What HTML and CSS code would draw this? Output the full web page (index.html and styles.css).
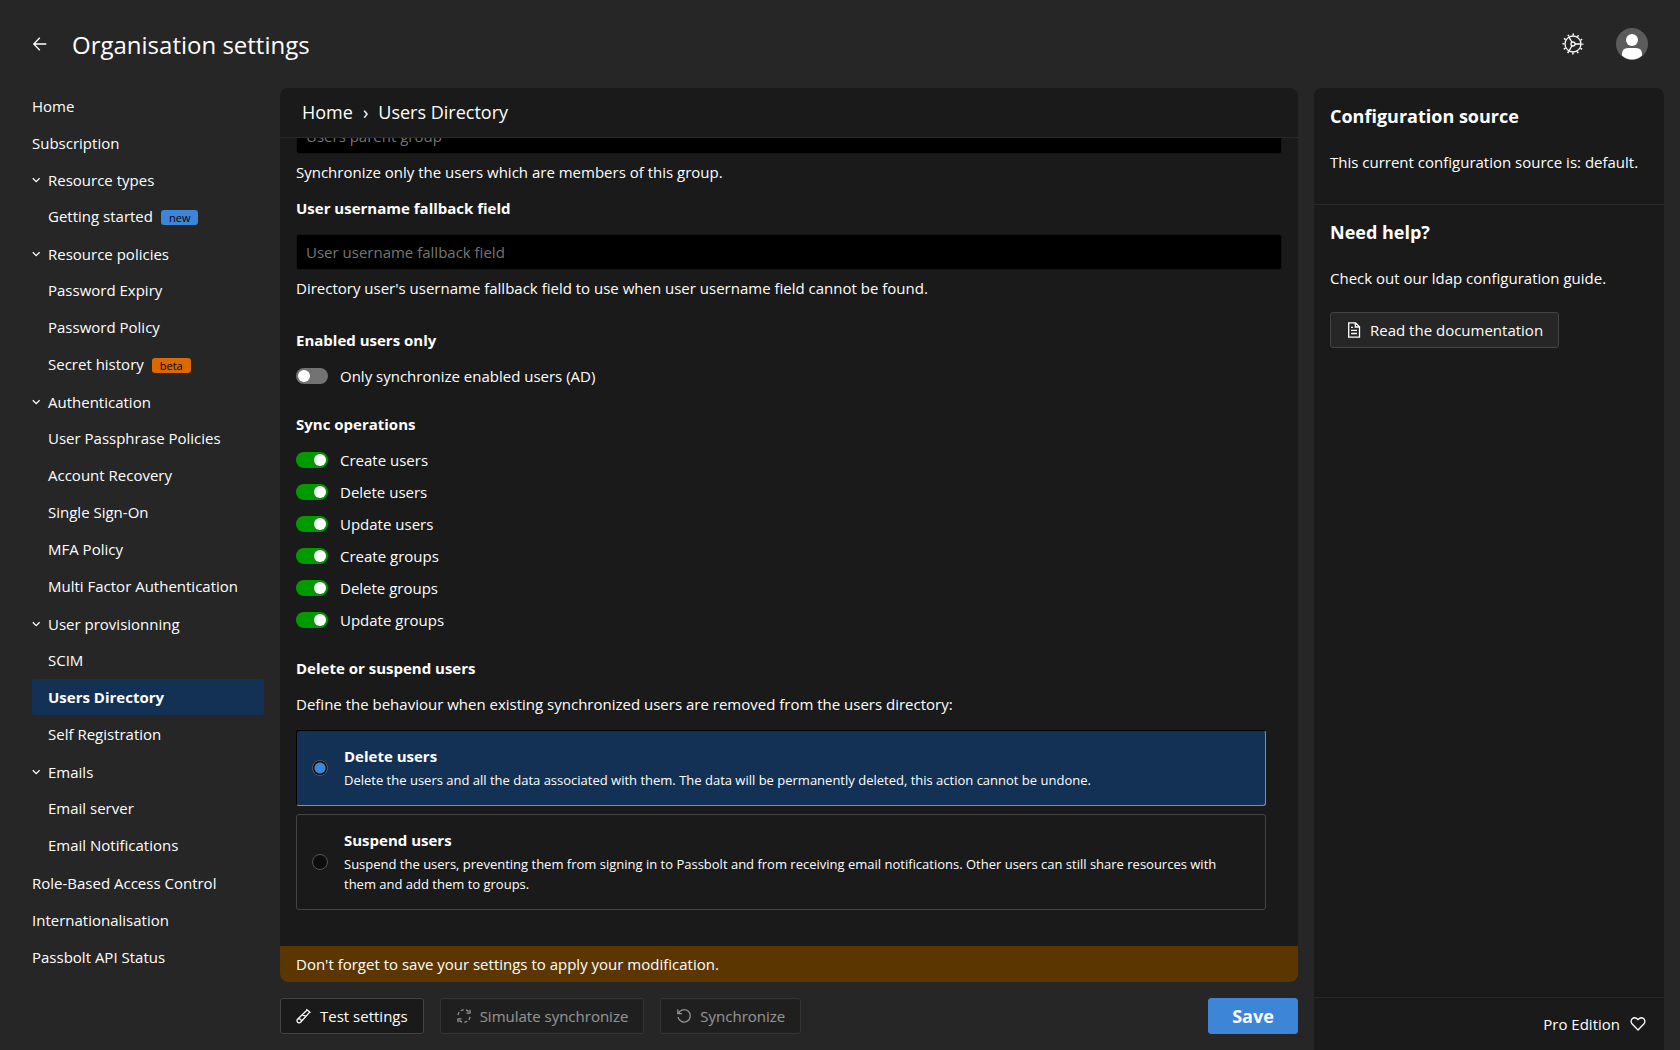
FILE: index.html
```
<!DOCTYPE html>
<html lang="en">
<head>
<meta charset="utf-8">
<title>Organisation settings</title>
<link rel="stylesheet" href="styles.css">
</head>
<body>
<svg class="sprite" aria-hidden="true">
  <symbol id="chevron" viewBox="0 0 10 10"><path d="M.8 3.200 4.200 6.600 7.600 3.200"/></symbol>
</svg>
<div class="app">
  <header class="topbar">
    <button class="icon-button" type="button" aria-label="Go back">
      <svg width="16" height="16" viewBox="0 0 16 16"><path d="M14.300 8H1.800M7.800 1.800 1.800 8l6 6.200"/></svg>
    </button>
    <h1>Organisation settings</h1>
    <div class="topbar-actions">
      <button class="icon-button" type="button" aria-label="Administration">
        <svg width="22" height="22" viewBox="0 0 22 22"><circle cx="11" cy="11" r="8"/><circle cx="11" cy="11" r="2"/><path d="M13 11h6M10 9.300 7 4.100M10 12.700 7 17.900"/><circle cx="11" cy="11" r="9.500" stroke-width="2" stroke-dasharray="1.500 3.474" stroke-dashoffset=".75"/></svg>
      </button>
      <button class="icon-button" type="button" aria-label="Profile">
        <svg class="avatar" width="32" height="32" viewBox="0 0 32 32"><circle cx="16" cy="16" r="16" fill="#5b5b5b"/><circle cx="16" cy="12" r="6" fill="#fff"/><path fill="#fff" d="M6 27.500v-1.500q0-6 6-6h8q6 0 6 6v1.500q-4 4-10 4t-10-4z"/></svg>
      </button>
    </div>
  </header>

  <nav class="sidebar" aria-label="Settings">
    <a href="#">Home</a>
    <a href="#">Subscription</a>
    <button class="group" type="button"><svg><use href="#chevron"/></svg>Resource types</button>
    <a class="child" href="#">Getting started<span class="chip new">new</span></a>
    <button class="group" type="button"><svg><use href="#chevron"/></svg>Resource policies</button>
    <a class="child" href="#">Password Expiry</a>
    <a class="child" href="#">Password Policy</a>
    <a class="child" href="#">Secret history<span class="chip beta">beta</span></a>
    <button class="group" type="button"><svg><use href="#chevron"/></svg>Authentication</button>
    <a class="child" href="#">User Passphrase Policies</a>
    <a class="child" href="#">Account Recovery</a>
    <a class="child" href="#">Single Sign-On</a>
    <a class="child" href="#">MFA Policy</a>
    <a class="child" href="#">Multi Factor Authentication</a>
    <button class="group" type="button"><svg><use href="#chevron"/></svg>User provisionning</button>
    <a class="child" href="#">SCIM</a>
    <a class="child selected" href="#" aria-current="page">Users Directory</a>
    <a class="child" href="#">Self Registration</a>
    <button class="group" type="button"><svg><use href="#chevron"/></svg>Emails</button>
    <a class="child" href="#">Email server</a>
    <a class="child" href="#">Email Notifications</a>
    <a href="#">Role-Based Access Control</a>
    <a href="#">Internationalisation</a>
    <a href="#">Passbolt API Status</a>
  </nav>

  <main class="main">
    <section class="panel">
      <div class="breadcrumbs"><a href="#">Home</a><span>›</span><a href="#">Users Directory</a></div>
      <form class="settings" id="settings">
        <div class="field">
          <input class="text" type="text" placeholder="Users parent group" aria-label="Users parent group">
          <p>Synchronize only the users which are members of this group.</p>
        </div>
        <div class="field">
          <label for="fallback">User username fallback field</label>
          <input class="text" id="fallback" type="text" placeholder="User username fallback field">
          <p>Directory user's username fallback field to use when user username field cannot be found.</p>
        </div>
        <fieldset class="enabled">
          <legend>Enabled users only</legend>
          <label class="toggle"><input type="checkbox">Only synchronize enabled users (AD)</label>
        </fieldset>
        <fieldset>
          <legend>Sync operations</legend>
          <label class="toggle"><input type="checkbox" checked>Create users</label>
          <label class="toggle"><input type="checkbox" checked>Delete users</label>
          <label class="toggle"><input type="checkbox" checked>Update users</label>
          <label class="toggle"><input type="checkbox" checked>Create groups</label>
          <label class="toggle"><input type="checkbox" checked>Delete groups</label>
          <label class="toggle"><input type="checkbox" checked>Update groups</label>
        </fieldset>
        <fieldset>
          <legend>Delete or suspend users</legend>
          <p>Define the behaviour when existing synchronized users are removed from the users directory:</p>
          <div class="options">
            <label class="option"><input type="radio" name="removal" checked><span><strong>Delete users</strong><small>Delete the users and all the data associated with them. The data will be permanently deleted, this action cannot be undone.</small></span></label>
            <label class="option"><input type="radio" name="removal"><span><strong>Suspend users</strong><small>Suspend the users, preventing them from signing in to Passbolt and from receiving email notifications. Other users can still share resources with them and add them to groups.</small></span></label>
          </div>
        </fieldset>
      </form>
      <div class="warning">Don't forget to save your settings to apply your modification.</div>
    </section>
    <div class="actions">
      <button class="button dark" type="button">
        <svg width="16" height="16" viewBox="0 0 16 16"><path d="M10.300 1.300l4.200 3.500M10.900 2.200 1.600 11.200a2.100 2.100 0 0 0 3 3L13.500 4.400M6.500 6.900l3.500 1.500M2.100 11.200q1.500-.9 2.600.2t.3 2.600"/></svg>
        Test settings
      </button>
      <button class="button dark" type="button" disabled>
        <svg width="16" height="16" viewBox="0 0 16 16"><path d="M2 7.200q.2-1.700 1.200-3M4.700 2.700q1.300-.9 3-.9M10 2q1.500.4 2.700 1.500M14 1.800v3.400h-3.400M14 8.800q-.2 1.700-1.200 3M11.300 13.300q-1.300.9-3 .9M6 14q-1.500-.4-2.700-1.500M2 14.200v-3.400h3.400"/></svg>
        Simulate synchronize
      </button>
      <button class="button dark" type="button" disabled>
        <svg width="16" height="16" viewBox="0 0 16 16"><path d="M1.800 1.500v4.200H6M2.300 5.500A6.200 6.200 0 1 1 2 9.200"/></svg>
        Synchronize
      </button>
      <button class="button save" type="submit" form="settings">Save</button>
    </div>
  </main>

  <aside class="help">
    <section>
      <h2>Configuration source</h2>
      <p>This current configuration source is: default.</p>
    </section>
    <section>
      <h2>Need help?</h2>
      <p>Check out our ldap configuration guide.</p>
      <a class="button" href="#">
        <svg width="16" height="16" viewBox="0 0 16 16"><path d="M2.700.8h6.800l4 3.900v10.500H2.700zM9.300.8V5h4.200M5 5.300h2M5 8.300h6M5 11.500h6"/></svg>
        Read the documentation
      </a>
    </section>
    <footer>
      <a href="#">Pro Edition</a>
      <svg width="16" height="16" viewBox="0 0 16 16"><path d="M8 14 2.200 8A3.700 3.700 0 0 1 2.200 2.700Q5 .5 8 3.500 11 .5 13.800 2.700A3.700 3.700 0 0 1 13.800 8z"/></svg>
    </footer>
  </aside>
</div>
</body>
</html>
```
FILE: styles.css
```
* { box-sizing: border-box; }

body {
  margin: 0;
  background: #262626;
  color: #fff;
  font: 15px/24px "Open Sans", sans-serif;
}

h1, h2, p, fieldset, legend { margin: 0; padding: 0; }
fieldset { border: 0; min-width: 0; }
a { color: inherit; text-decoration: none; }
button, input { font: inherit; color: inherit; }
svg { flex: none; fill: none; stroke: currentColor; stroke-width: 1.3; }
.sprite { display: none; }

.app {
  display: grid;
  grid-template: 88px minmax(0, 1fr) / 264px minmax(0, 1fr) 350px;
  column-gap: 16px;
  height: 100vh;
  padding-right: 16px;
}

/* Top bar */
.topbar {
  grid-column: 1 / -1;
  display: flex;
  align-items: center;
  padding: 0 16px 0 32px;
}
.topbar h1 { margin-left: 24px; padding-top: 2px; font-size: 24px; line-height: 32px; font-weight: 400; }
.topbar-actions { display: flex; align-items: center; gap: 32px; margin-left: auto; }
.icon-button { display: flex; padding: 0; border: 0; background: none; }
.avatar { stroke: none; }

/* Sidebar */
.sidebar { display: flex; flex-direction: column; gap: 1px; padding-left: 32px; margin-top: -1px; }
.sidebar a, .group {
  display: flex;
  align-items: center;
  height: 36px;
  padding: 2px 0 0;
  border: 0;
  border-radius: 3px;
  background: none;
  text-align: left;
}
.sidebar .child { padding: 0 0 0 16px; }
.group svg { width: 10px; height: 10px; margin-right: 6px; }
.sidebar .selected { background: #133155; font-weight: 700; }
.chip {
  margin: 2px 0 0 8px;
  padding: 1px 8px 0;
  border-radius: 3px;
  color: #000;
  font-size: 11px;
  line-height: 14px;
}
.new { background: #3d85d7; }
.beta { background: #dc6800; }

/* Main panel */
.main { display: flex; flex-direction: column; min-height: 0; }
.panel {
  flex: 1;
  min-height: 0;
  display: flex;
  flex-direction: column;
  overflow: hidden;
  border-radius: 8px;
  background: #1a1a1a;
}
.breadcrumbs {
  display: flex;
  align-items: center;
  gap: 10px;
  flex: none;
  height: 50px;
  padding: 0 22px 2px;
  border-bottom: 1px solid #292929;
  font-size: 18px;
}
.settings {
  flex: 1;
  min-height: 0;
  display: flex;
  flex-direction: column;
  justify-content: flex-end;
  gap: 24px;
  overflow: hidden;
  padding: 0 16px 36px;
}
.settings > * { flex: none; }
.field { display: flex; flex-direction: column; }
.field + .field { margin-top: -12px; }
.field label, legend { font-weight: 700; }
.text {
  height: 36px;
  margin: 14px 0 6px;
  padding: 0 9px;
  border: 1px solid #151515;
  border-radius: 3px;
  background: #000;
}
.text::placeholder { color: #757575; opacity: 1; }
.enabled { margin-top: 4px; }
legend { margin-bottom: 12px; }

.toggle { display: flex; align-items: center; gap: 12px; }
.toggle + .toggle { margin-top: 8px; }
.toggle input {
  appearance: none;
  width: 32px;
  height: 16px;
  margin: 0;
  padding: 2px;
  border-radius: 8px;
  background: #737373;
}
.toggle input::before {
  content: "";
  display: block;
  width: 12px;
  height: 12px;
  border-radius: 50%;
  background: #fff;
}
.toggle input:checked { background: #009a00; }
.toggle input:checked::before { margin-left: auto; }

.options { display: grid; gap: 8px; margin: 14px 16px 0 0; }
.option {
  display: flex;
  align-items: center;
  gap: 16px;
  padding: 15px;
  border: 1px solid #444;
  border-radius: 3px;
}
.option:has(:checked) { background: #133155; border-color: #000 #7f8fa6 #7f8fa6 #000; }
.option input {
  appearance: none;
  flex: none;
  width: 16px;
  height: 16px;
  margin: 0;
  border: 1px solid #555;
  border-radius: 50%;
  background: #0d0d0d;
}
.option input:checked { background: radial-gradient(circle, #3d85d7 5px, #0d0d0d 6px); }
.option strong, .option small { display: block; line-height: 20px; }
.option strong { margin-bottom: 4px; }
.option small { font-size: 13px; }

.warning { flex: none; padding: 6px 16px; background: #5c3600; }

/* Buttons */
.actions { display: flex; gap: 16px; padding: 16px 0; }
.button {
  display: inline-flex;
  align-items: center;
  gap: 8px;
  height: 36px;
  padding: 0 15px;
  border: 1px solid #444;
  border-radius: 3px;
  background: #262626;
}
.dark { background: #1a1a1a; }
.button:disabled { opacity: .5; }
.save {
  justify-content: center;
  width: 90px;
  margin-left: auto;
  border-color: #3d85d7;
  background: #3d85d7;
  font-size: 18px;
  font-weight: 700;
}

/* Help column */
.help {
  display: flex;
  flex-direction: column;
  border-radius: 8px 8px 0 0;
  background: #1a1a1a;
}
.help section { padding: 15px 16px; }
.help section:first-child { padding: 16px 16px 30px; border-bottom: 1px solid #292929; }
.help h2 { margin-bottom: 22px; font-size: 18px; line-height: 24px; }
.help .button { margin-top: 22px; }
.help footer {
  display: flex;
  justify-content: flex-end;
  align-items: center;
  gap: 10px;
  height: 53px;
  margin-top: auto;
  padding: 0 18px;
  border-top: 1px solid #292929;
}
```
